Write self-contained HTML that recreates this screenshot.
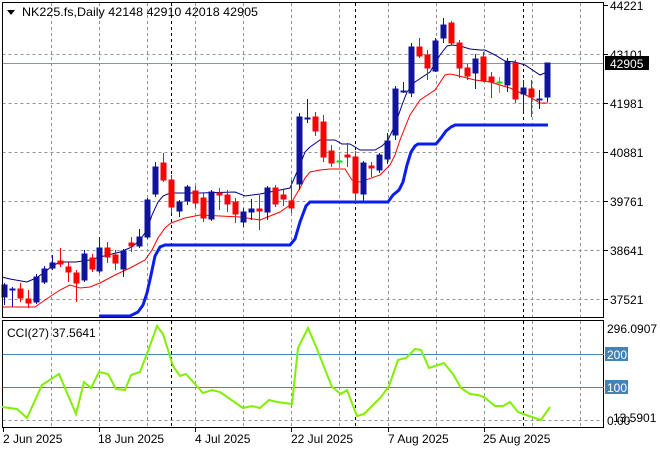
<!DOCTYPE html>
<html><head><meta charset="utf-8"><style>
html,body{margin:0;padding:0;background:#fff;}
svg{display:block;font-family:"Liberation Sans",sans-serif;}
</style></head><body>
<svg width="660" height="450" viewBox="0 0 660 450" xmlns="http://www.w3.org/2000/svg">
<rect width="660" height="450" fill="#fff"/>
<g stroke="#8c949c" stroke-width="1" stroke-dasharray="3,3" fill="none">
<path d="M2.5 54.5H604M2.5 103.5H604M2.5 152.5H604M2.5 201.5H604M2.5 250.5H604M2.5 299.5H604"/>
<path d="M51.5 3V317M99.5 3V317M147.5 3V317M195.5 3V317M243.5 3V317M291.5 3V317M339.5 3V317M388.5 3V317M436.5 3V317M484.5 3V317M532.5 3V317M580.5 3V317"/>
<path d="M51.5 321V426M99.5 321V426M147.5 321V426M195.5 321V426M243.5 321V426M291.5 321V426M339.5 321V426M388.5 321V426M436.5 321V426M484.5 321V426M532.5 321V426M580.5 321V426"/>
<path d="M2.5 420.5H604"/>
</g>
<g stroke="#000" stroke-width="1" stroke-dasharray="3,3">
<path d="M171.5 3V317M355.5 3V317M523.5 3V317M171.5 321V426M355.5 321V426M523.5 321V426"/>
</g>
<path d="M2 63.5H604" stroke="#8c949c" stroke-width="1"/>
<polyline fill="none" stroke="#0a1ef0" stroke-width="3" points="99,316 130,316 138,312 143,305 147,293 151,275 155,256 160,247 165,245 290,245 295,239 300,222 306,206 310,202 388,202 393,195 399,190 403,182 407,165 411,152 415,146 418,144 436,144 441,138 446,131 451,127 455,125 548,125"/>
<polyline fill="none" stroke="#000080" stroke-width="1" points="2,277 10,279 27,282 36,278 45,272 52,266 60,262 76,262 90,260 100,257 120,252 132,247 140,240 147,230 152,215 158,202 163,196 170,193 200,193 235,192 245,196 260,194 290,188 300,165 305,152 310,147 320,140 335,140 342,144 350,144 360,150 375,150 382,146 388,140 395,125 402,105 407,92 415,82 430,72 440,55 447,46 452,45 460,46 470,49 480,50 485,50 495,55 505,61 515,62 525,65 540,75 547,72"/>
<polyline fill="none" stroke="#ff0000" stroke-width="1" points="2,307 35,307 45,300 60,290 70,285 80,288 90,287 100,283 115,275 130,268 145,260 152,250 158,238 165,228 171,223 185,218 200,215 220,216 240,217 260,220 280,212 290,205 300,188 305,178 310,172 320,170 330,169 345,169 352,180 360,182 380,175 390,165 395,155 400,140 410,115 420,100 435,90 445,75 450,74 455,75 475,80 490,82 510,88 530,97 540,103 548,103"/>
<g stroke-width="1">
<g stroke="#10149a" fill="#10149a">
<path d="M4.5 283V305M12.5 287V307M36.5 274V304M44.5 266V284M52.5 255V270M84.5 250V282M99.5 237V273M123.5 249V277M139.5 229V248M147.5 198V239M155.5 162V197M179.5 200V217M187.5 185V205M211.5 190V221M243.5 208V227M251.5 199V220M267.5 186V220M299.5 113V190M307.5 99V123M363.5 161V202M379.5 153V173M387.5 133V164M395.5 86V140M403.5 82V93M411.5 43V97M435.5 38V72M443.5 18V43M475.5 54V89M507.5 58V92M523.5 80V113M539.5 90V109M547.5 63V102"/>
<rect x="2" y="285" width="5" height="12"/><rect x="10" y="289" width="5" height="1"/><rect x="34" y="277" width="5" height="25"/><rect x="42" y="269" width="5" height="13"/><rect x="50" y="263" width="5" height="5"/><rect x="82" y="254" width="5" height="26"/><rect x="97" y="248" width="5" height="23"/><rect x="121" y="251" width="5" height="18"/><rect x="137" y="237" width="5" height="9"/><rect x="145" y="200" width="5" height="37"/><rect x="153" y="167" width="5" height="27"/><rect x="177" y="202" width="5" height="9"/><rect x="185" y="187" width="5" height="14"/><rect x="209" y="192" width="5" height="27"/><rect x="241" y="212" width="5" height="10"/><rect x="249" y="209" width="5" height="3"/><rect x="265" y="188" width="5" height="24"/><rect x="297" y="117" width="5" height="67"/><rect x="305" y="118" width="5" height="1"/><rect x="361" y="163" width="5" height="31"/><rect x="377" y="155" width="5" height="15"/><rect x="385" y="141" width="5" height="18"/><rect x="393" y="89" width="5" height="46"/><rect x="401" y="91" width="5" height="1"/><rect x="409" y="47" width="5" height="46"/><rect x="433" y="41" width="5" height="30"/><rect x="441" y="25" width="5" height="13"/><rect x="473" y="59" width="5" height="14"/><rect x="505" y="62" width="5" height="23"/><rect x="521" y="88" width="5" height="6"/><rect x="537" y="99" width="5" height="1"/><rect x="545" y="63" width="5" height="34"/>
</g>
<g stroke="#ff0000" fill="#ff0000">
<path d="M20.5 283V302M28.5 290V308M60.5 248V267M68.5 262V282M76.5 270V302M92.5 254V272M107.5 242V263M115.5 250V270M131.5 237V252M163.5 153V182M171.5 175V213M195.5 186V208M203.5 193V222M219.5 188V210M227.5 190V212M235.5 198V223M259.5 195V230M275.5 185V207M283.5 190V206M291.5 180V213M315.5 112V136M323.5 115V162M331.5 145V167M347.5 143V167M355.5 151V202M371.5 162V177M419.5 38V58M427.5 50V80M451.5 21V45M459.5 40V78M467.5 64V80M483.5 52V82M491.5 72V98M515.5 60V103M531.5 80V117"/>
<rect x="18" y="289" width="5" height="9"/><rect x="26" y="299" width="5" height="4"/><rect x="58" y="261" width="5" height="3"/><rect x="66" y="267" width="5" height="5"/><rect x="74" y="273" width="5" height="10"/><rect x="90" y="258" width="5" height="11"/><rect x="105" y="248" width="5" height="9"/><rect x="113" y="255" width="5" height="8"/><rect x="129" y="243" width="5" height="3"/><rect x="161" y="163" width="5" height="17"/><rect x="169" y="180" width="5" height="27"/><rect x="193" y="191" width="5" height="12"/><rect x="201" y="198" width="5" height="20"/><rect x="217" y="193" width="5" height="2"/><rect x="225" y="195" width="5" height="9"/><rect x="233" y="202" width="5" height="12"/><rect x="257" y="209" width="5" height="2"/><rect x="273" y="188" width="5" height="16"/><rect x="281" y="195" width="5" height="4"/><rect x="289" y="201" width="5" height="7"/><rect x="313" y="117" width="5" height="14"/><rect x="321" y="122" width="5" height="35"/><rect x="329" y="151" width="5" height="12"/><rect x="345" y="155" width="5" height="2"/><rect x="353" y="157" width="5" height="36"/><rect x="369" y="166" width="5" height="2"/><rect x="417" y="47" width="5" height="9"/><rect x="425" y="55" width="5" height="13"/><rect x="449" y="23" width="5" height="20"/><rect x="457" y="43" width="5" height="25"/><rect x="465" y="68" width="5" height="8"/><rect x="481" y="57" width="5" height="24"/><rect x="489" y="77" width="5" height="5"/><rect x="513" y="63" width="5" height="36"/><rect x="529" y="89" width="5" height="8"/>
</g>
<g stroke="#00e000" fill="#00e000">
<path d="M339.5 156V168M499.5 77V93"/><rect x="337" y="161" width="5" height="1"/><rect x="497" y="82" width="5" height="1"/>
</g>
</g>
<rect x="2.5" y="2.5" width="601" height="315" fill="none" stroke="#000"/>
<rect x="2.5" y="320.5" width="601" height="107" fill="none" stroke="#000"/>
<path d="M3 354.5H604M3 387.5H604" stroke="#4682b4" stroke-width="1"/>
<polyline fill="none" stroke="#80f000" stroke-width="2" points="2,407 17,409 27,418 42,385 59,374 76,414 84,382 91,388 99,372 108,374 116,389 125,390 131,375 140,372 148,351 157,326 163,334 173,366 180,376 186,374 203,393 212,390 220,392 233,401 243,408 252,406 260,408 269,400 277,402 292,404 298,348 308,328 317,349 326,372 332,387 341,394 347,390 357,416 364,414 381,397 389,386 398,360 406,358 415,349 421,350 429,368 444,363 453,374 461,388 470,394 478,395 484,397 495,406 503,406 510,402 518,412 529,416 541,420 550,407"/>
<path d="M7 10L15 10L11 15Z" fill="#000"/>
<text x="22" y="16" font-size="12" fill="#000" textLength="236" lengthAdjust="spacingAndGlyphs">NK225.fs,Daily  42148 42910 42018 42905</text>
<text x="7" y="337" font-size="12" fill="#000">CCI(27) 37.5641</text>
<g font-size="12" fill="#000">
<path d="M604 5.5h4M604 54.5h4M604 103.5h4M604 152.5h4M604 201.5h4M604 250.5h4M604 299.5h4" stroke="#000"/>
<text x="610" y="10">44221</text>
<text x="610" y="59">43101</text>
<text x="610" y="108">41981</text>
<text x="610" y="157">40881</text>
<text x="610" y="206">39761</text>
<text x="610" y="255">38641</text>
<text x="610" y="304">37521</text>
<rect x="605" y="56" width="44" height="14" fill="#000"/>
<text x="610" y="68" fill="#fff">42905</text>
<text x="607" y="333">296.0907</text>
<rect x="605" y="347" width="23" height="14" fill="#4682b4"/>
<text x="607" y="359" fill="#fff">200</text>
<rect x="605" y="380" width="23" height="14" fill="#4682b4"/>
<text x="607" y="392" fill="#fff">100</text>
<text x="607" y="425">0.00</text>
<text x="613" y="422">13.5901</text>
</g>
<g font-size="12" fill="#000">
<path d="M3.5 428v4M99.5 428v4M195.5 428v4M291.5 428v4M388.5 428v4M484.5 428v4" stroke="#000"/>
<text x="3" y="443">2 Jun 2025</text>
<text x="98" y="443">18 Jun 2025</text>
<text x="195" y="443">4 Jul 2025</text>
<text x="291" y="443">22 Jul 2025</text>
<text x="388" y="443">7 Aug 2025</text>
<text x="483" y="443">25 Aug 2025</text>
</g>
</svg>
</body></html>
